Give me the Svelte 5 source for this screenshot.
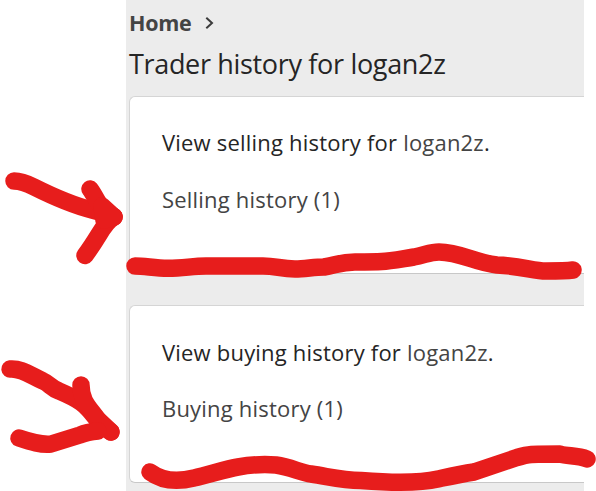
<script>
	const user = "logan2z";

	const cards = [
		{ type: "selling", link: "Selling history", count: 1 },
		{ type: "buying", link: "Buying history", count: 1 }
	];

	// hand drawn marker strokes
	const strokes = [
		"M14 181 C22 181 28 184 34 187 C54 197 76 206 92 210 Q104 213 114 216.500",
		"M90 189 C94 194 97 202 102 208 L114 217 C104 222 101 234 85 255.500",
		"M102 206 L114 217 L104 220 Z",
		"M135 266 C145 266 155 268.300 168 268.300 C184 268.300 192 266 206 266 H263 C276 266 281 269 295 269 C305 269 314 267 324 267 C336 265 341 262 355 262 C386 262 382 262 414 257 C425 255 430 252 439 252 C460 252 476 263 497 265 C521 266 534 271 546 271 C562 271 566 271 573 270",
		"M10 369 C21 368 30 375 43 381 C50 384 51 388 59 391 C80 400 85 404 95 417 L111 432",
		"M81 385 C81 403 91 409 98 420 Q103 427 111 432",
		"M19 438 C31 442 41 445 51 444 L80 435 Q87 432 98 431",
		"M150 472 C162 481 178 482 194 478 C208 475 226 469 238 467 C252 464.500 264 464 276 465 C291 467 301 473 311 474 C331 477 342 480 361 480.500 C393 483 421 483 438 479 C452 476 461 474 474 472 L517 457.500 C529 454 529 454 560 454 C568 456.500 577 455 587 459"
	];
</script>

<div class="page">
	<main>
		<nav>
			<a href="#home">Home</a>
			<svg class="chevron" viewBox="0 0 9 12" width="9" height="12">
				<path d="M1.300 0.800 7 6 1.300 11.200" />
			</svg>
		</nav>
		<h1>Trader history for {user}</h1>
		{#each cards as card}
			<section class="card {card.type}">
				<p>View {card.type} history for <a href="#user">{user}</a>.</p>
				<p class="link"><a href="#history">{card.link} ({card.count})</a></p>
			</section>
		{/each}
	</main>
	<svg class="marker" viewBox="0 0 596 491" width="596" height="491">
		{#each strokes as d}
			<path {d} />
		{/each}
	</svg>
</div>

<style>
	:global(body) {
		margin: 0;
		background: #fff;
	}

	.page {
		position: relative;
		width: 596px;
		height: 491px;
		overflow: hidden;
		font-family: "Open Sans", "Noto Sans", sans-serif;
		color: #252525;
	}

	main {
		box-sizing: border-box;
		width: 458px;
		height: 491px;
		margin-left: 126px;
		padding-left: 3px;
		background: #ececec;
		overflow: hidden;
	}

	nav {
		display: flex;
		align-items: center;
		gap: 14px;
		height: 46px;
		font-size: 21.5px;
		font-weight: 700;
		letter-spacing: -0.3px;
	}

	nav a {
		margin-top: -1px;
	}

	a {
		color: #444;
		text-decoration: none;
	}

	.chevron {
		flex: none;
		fill: none;
		stroke: #3c3c3c;
		stroke-width: 2;
	}

	h1 {
		margin: 0;
		height: 50px;
		line-height: 35px;
		font-size: 27px;
		font-weight: 400;
		letter-spacing: -0.33px;
		white-space: nowrap;
	}

	.card {
		box-sizing: border-box;
		height: 178px;
		margin-bottom: 31px;
		padding: 29px 0 0 32px;
		border: 1px solid #d5d5d5;
		border-bottom-color: #c8c8c8;
		border-right: 0;
		border-radius: 6px 0 0 6px;
		background: #fff;
	}

	.card.buying {
		padding-top: 30px;
	}

	p {
		margin: 0;
		height: 57px;
		line-height: 32px;
		font-size: 22px;
		letter-spacing: 0.2px;
		white-space: nowrap;
	}

	.buying p {
		height: 56px;
	}

	.marker {
		position: absolute;
		top: 0;
		left: 0;
		fill: none;
		stroke: #e71d1c;
		stroke-width: 17.5;
		stroke-linecap: round;
		stroke-linejoin: round;
	}
</style>
